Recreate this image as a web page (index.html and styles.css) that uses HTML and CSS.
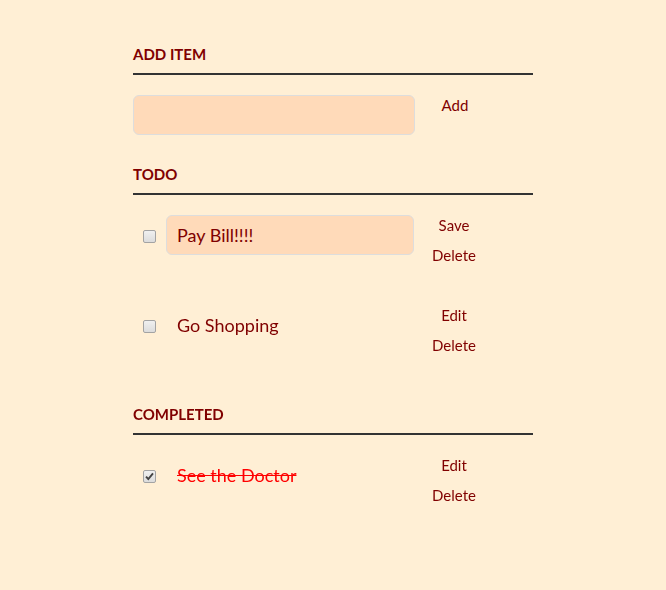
FILE: index.html
```html
<!DOCTYPE html>
<html lang="en">
<head>
<meta charset="utf-8">
<title>Todo</title>
<link rel="stylesheet" href="styles.css">
</head>
<body>
<div class="app">
  <label class="section-title new-title" for="new-task">Add item</label>
  <div class="new-row">
    <input class="field new-field" id="new-task" type="text">
    <button class="action">Add</button>
  </div>

  <h3 class="section-title">Todo</h3>
  <ul class="task-list">
    <li class="task">
      <input class="check" type="checkbox">
      <input class="field task-field" id="editing" type="text" value="Pay Bill!!!!">
      <div class="actions">
        <button class="action">Save</button>
        <button class="action">Delete</button>
      </div>
    </li>
    <li class="task">
      <input class="check" type="checkbox">
      <label class="task-label">Go Shopping</label>
      <div class="actions">
        <button class="action">Edit</button>
        <button class="action">Delete</button>
      </div>
    </li>
  </ul>

  <h3 class="section-title">Completed</h3>
  <ul class="task-list">
    <li class="task">
      <input class="check" type="checkbox" checked>
      <label class="task-label done">See the Doctor</label>
      <div class="actions">
        <button class="action">Edit</button>
        <button class="action">Delete</button>
      </div>
    </li>
  </ul>
</div>
<script src="app.js"></script>
</body>
</html>
```

FILE: styles.css
```css
html, body {
  margin: 0;
  padding: 0;
  background: #ffefd5;
  min-height: 100%;
}

body {
  font-family: Lato, "Liberation Sans", sans-serif;
  color: #800000;
}

.app {
  width: 400px;
  margin: 0 auto;
  padding-top: 15px;
}

.section-title {
  display: block;
  margin: 0;
  padding: 30px 0 10px;
  font-size: 15px;
  line-height: 18px;
  font-weight: 700;
  text-transform: uppercase;
  color: #800000;
  border-bottom: 2px solid #333;
}

.new-title {
  margin-bottom: 20px;
}

.new-row {
  display: flex;
  align-items: flex-start;
}

.field {
  box-sizing: border-box;
  height: 40px;
  margin: 0;
  padding: 10px;
  font-family: Lato, "Liberation Sans", sans-serif;
  font-size: 18px;
  line-height: 18px;
  color: #800000;
  caret-color: #800000;
  background: #ffdab9;
  border: 1px solid #ddd;
  border-radius: 6px;
  outline: none;
}

.new-field {
  width: 282px;
}

.task-field {
  width: 248px;
}

.action {
  display: block;
  width: 80px;
  height: 20px;
  margin: 0;
  padding: 1px 6px;
  background: none;
  border: 0;
  font-family: Lato, "Liberation Sans", sans-serif;
  font-size: 15px;
  line-height: 18px;
  color: #800000;
  text-align: center;
  cursor: pointer;
}

.task-list {
  margin: 0;
  padding: 0;
  list-style: none;
}

.task {
  display: flex;
  align-items: flex-start;
  padding: 20px 0;
}

.check {
  -webkit-appearance: none;
  appearance: none;
  box-sizing: border-box;
  width: 13px;
  height: 13px;
  margin: 15px 10px 0;
  border: 1px solid #a3a3a3;
  border-radius: 2px;
  background: linear-gradient(#f0f0f0, #dcdcdc);
  flex: none;
}

.check:checked {
  background-image: url("data:image/svg+xml,%3Csvg xmlns='http://www.w3.org/2000/svg' viewBox='0 0 11 11'%3E%3Cpath d='M2 5.6 L4.3 8 L9 2.4' fill='none' stroke='%23444' stroke-width='1.9'/%3E%3C/svg%3E"), linear-gradient(#f0f0f0, #dcdcdc);
  background-size: 11px 11px, auto;
  background-repeat: no-repeat;
}

.task-label {
  box-sizing: border-box;
  width: 248px;
  padding-left: 11px;
  font-size: 18px;
  line-height: 40px;
  color: #800000;
}

.done {
  color: #ff0000;
  text-decoration: line-through;
}

.actions {
  display: flex;
  flex-direction: column;
  gap: 10px;
}
```

FILE: app.js
```js
var field = document.getElementById('editing');
field.focus();
var len = field.value.length;
field.setSelectionRange(len, len);
```
